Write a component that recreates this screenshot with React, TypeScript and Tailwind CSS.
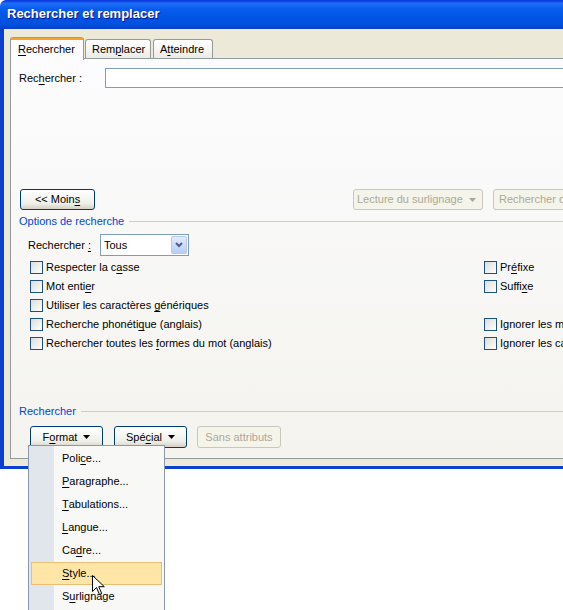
import React from "react";

const font = { fontFamily: '"Liberation Sans", Arial, sans-serif' };

function U({ children }: { children: React.ReactNode }) {
  return <span className="underline underline-offset-2 decoration-1">{children}</span>;
}

function Btn({
  children,
  className = "",
}: {
  children: React.ReactNode;
  className?: string;
}) {
  return (
    <div
      className={
        "flex h-[21px] items-center justify-center whitespace-nowrap rounded-[3px] border border-[#003C74] bg-[linear-gradient(#ffffff,#f0f0ea_70%,#d6d0c5)] text-[11px] text-black " +
        className
      }
    >
      {children}
    </div>
  );
}

function DisabledBtn({
  children,
  className = "",
}: {
  children: React.ReactNode;
  className?: string;
}) {
  return (
    <div
      className={
        "flex items-center whitespace-nowrap rounded-[3px] border border-[#C9C7BA] bg-[#F5F4EA] text-[11px] text-[#ACA899] " +
        className
      }
    >
      {children}
    </div>
  );
}

function Arrow({ color = "#000" }: { color?: string }) {
  return (
    <svg width="7" height="4" viewBox="0 0 7 4" className="ml-[6px]">
      <path d="M0 0h7L3.5 4z" fill={color} />
    </svg>
  );
}

function Check({ children }: { children: React.ReactNode }) {
  return (
    <div className="flex h-[19px] items-center whitespace-nowrap">
      <div className="h-[13px] w-[13px] border border-[#1C5180] bg-[linear-gradient(135deg,#dcdcd7,#ffffff)]" />
      <span className="ml-[3px] text-[11px] text-black">{children}</span>
    </div>
  );
}

function GroupHeader({ children }: { children: React.ReactNode }) {
  return (
    <div className="flex h-[13px] items-center pl-[8px]">
      <span className="whitespace-nowrap text-[11px] text-[#0046D5]">{children}</span>
      <div className="ml-[5px] h-px flex-1 bg-[#D0D0BF]" />
    </div>
  );
}

const menuItems: React.ReactNode[] = [
  <>Poli<U>c</U>e...</>,
  <><U>P</U>aragraphe...</>,
  <><U>T</U>abulations...</>,
  <><U>L</U>angue...</>,
  <>Ca<U>d</U>re...</>,
  <><U>S</U>tyle...</>,
  <>S<U>u</U>rlignage</>,
];

export default function App() {
  return (
    <div className="relative h-[610px] w-[563px] overflow-hidden bg-white" style={font}>
      <div className="w-[700px]">
        {/* title bar */}
        <div className="flex h-[29px] items-center rounded-t-[6px] bg-[linear-gradient(#0831D9,#1C6EF7_12%,#0A5DEC_30%,#0055E5_60%,#0050DE_85%,#0A3FC8)] pl-[7px]">
          <span className="pb-[1px] text-[13px] font-bold text-white [text-shadow:1px_1px_#0F1089]">
            Rechercher et remplacer
          </span>
        </div>

        {/* body */}
        <div className="border-b-[3px] border-l-[4px] border-[#0A3FD0] bg-[#ECE9D8] pb-[7px] pl-[6px] pt-[8px]">
          {/* tabs */}
          <div className="relative z-10 flex h-[21px] items-end">
            <div className="mb-[-2px] flex h-[23px] w-[74px] flex-col rounded-t-[3px] border-x border-[#919B9C] bg-[#FCFCFE]">
              <div className="h-[3px] rounded-t-[3px] bg-[#F6A529] shadow-[inset_0_1px_#E68B2C]" />
              <div className="pl-[7px] pt-[1px] text-[11px] text-black">
                <U>R</U>echercher
              </div>
            </div>
            <div className="ml-px flex h-[19px] w-[66px] items-center rounded-t-[3px] border-x border-t border-[#919B9C] bg-[linear-gradient(#ffffff,#ECEBE5)] pl-[6px] text-[11px] text-black">
              Rem<U>p</U>lacer
            </div>
            <div className="ml-[2px] flex h-[19px] w-[60px] items-center rounded-t-[3px] border-x border-t border-[#919B9C] bg-[linear-gradient(#ffffff,#ECEBE5)] pl-[6px] text-[11px] text-black">
              A<U>t</U>teindre
            </div>
          </div>

          {/* tab panel */}
          <div className="flex h-[401px] flex-col border border-[#919B9C] bg-[linear-gradient(#FCFCFE,#F4F3EE)]">
            <div className="mt-[9px] flex h-[20px] items-center">
              <span className="w-[94px] pl-[8px] text-[11px] text-black">
                Rec<U>h</U>ercher :
              </span>
              <div className="h-[20px] flex-1 border border-[#7F9DB9] bg-white" />
            </div>

            <div className="mt-[101px] flex h-[21px] items-center">
              <Btn className="ml-[9px] w-[75px]">
                &lt;&lt; Moin<U>s</U>
              </Btn>
              <DisabledBtn className="ml-[258px] h-[21px] w-[130px] pl-[3px]">
                Lecture du surlignage
                <span className="ml-auto mr-[8px]">
                  <Arrow color="#ACA899" />
                </span>
              </DisabledBtn>
              <DisabledBtn className="ml-[10px] h-[21px] w-[180px] pl-[5px]">
                Rechercher dans
              </DisabledBtn>
            </div>

            <div className="mt-[5px]">
              <GroupHeader>Options de recherche</GroupHeader>
            </div>

            <div className="mt-[6px] flex h-[22px] items-center">
              <span className="w-[89px] pl-[17px] text-[11px] text-black">
                Rechercher <U>:</U>
              </span>
              <div className="flex h-[22px] w-[89px] items-center border border-[#7F9DB9] bg-white">
                <span className="pl-[3px] text-[11px] text-black">Tous</span>
                <div className="ml-auto mr-px flex h-[18px] w-[16px] items-center justify-center rounded-[2px] border border-[#B5C8F5] bg-[linear-gradient(#E2EBFE,#B7CDF8)]">
                  <svg width="8" height="6" viewBox="0 0 8 6">
                    <path d="M1 1l3 3 3-3" stroke="#4D6185" strokeWidth="2" fill="none" />
                  </svg>
                </div>
              </div>
            </div>

            <div className="mt-[2px] grid grid-cols-[454px_1fr] pl-[19px]">
              <Check>Respecter la c<U>a</U>sse</Check>
              <Check>Pr<U>é</U>fixe</Check>
              <Check>Mot enti<U>e</U>r</Check>
              <Check>Suffi<U>x</U>e</Check>
              <Check>Utiliser les caractères <U>g</U>énériques</Check>
              <div />
              <Check>Recherche phonéti<U>q</U>ue (anglais)</Check>
              <Check>Ignorer les marques de ponctuation</Check>
              <Check>Rechercher toutes les <U>f</U>ormes du mot (anglais)</Check>
              <Check>Ignorer les caractères d'espacement</Check>
            </div>

            <div className="mt-[52px]">
              <GroupHeader>Rechercher</GroupHeader>
            </div>

            <div className="mt-[8px] flex h-[22px] items-center">
              <Btn className="ml-[19px] h-[22px] w-[73px]">
                F<U>o</U>rmat
                <Arrow />
              </Btn>
              <Btn className="ml-[11px] h-[22px] w-[73px]">
                Spé<U>c</U>ial
                <Arrow />
              </Btn>
              <DisabledBtn className="ml-[10px] h-[22px] w-[84px] justify-center">
                Sans attributs
              </DisabledBtn>
            </div>
          </div>
        </div>
      </div>

      {/* Format menu */}
      <div className="absolute left-[28px] top-[445px] w-[137px] border border-[#8A97AC] bg-[linear-gradient(90deg,#E1E6EC_0px,#E1E6EC_25px,#F8F8F6_25px)] py-px">
        {menuItems.map((item, i) => (
          <div
            key={i}
            className={
              "mx-[2px] flex h-[23px] items-center pl-[30px] text-[11px] text-black " +
              (i === 5 ? "border border-[#E9BF75] bg-[#FFE6A6]" : "border border-transparent")
            }
          >
            {item}
          </div>
        ))}
        <div className="h-[10px]" />
      </div>

      {/* mouse cursor */}
      <svg
        className="absolute left-[92px] top-[575px]"
        width="13"
        height="21"
        viewBox="0 0 13 21"
      >
        <path
          d="M0.5 0.5v16l4-4 3 7 2.2-1-3-6.8h5.6z"
          fill="#fff"
          stroke="#000"
          strokeWidth="1"
        />
      </svg>
    </div>
  );
}
